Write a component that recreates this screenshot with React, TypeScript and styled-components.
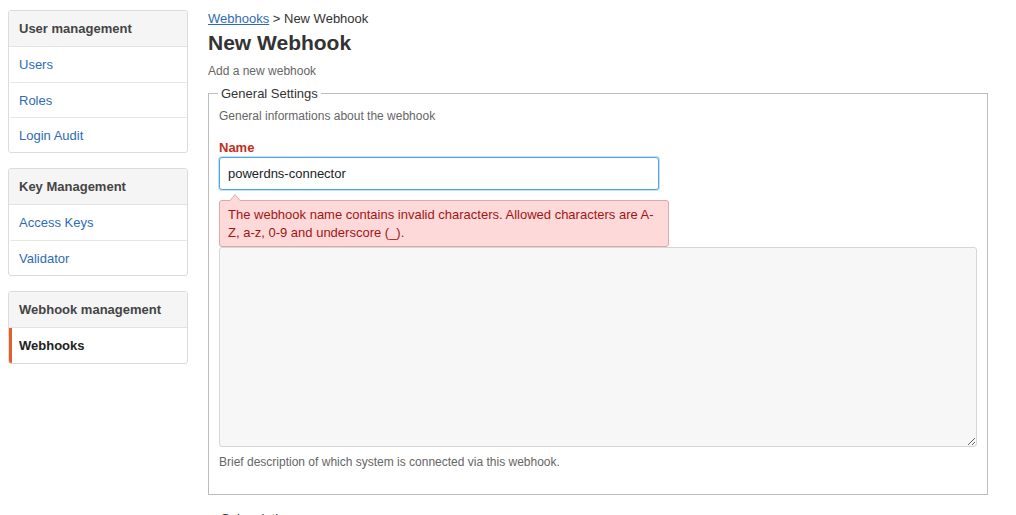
import React from 'react'
import styled, { createGlobalStyle } from 'styled-components'

const GlobalStyle = createGlobalStyle`
	html, body {
		margin: 0;
		padding: 0;
		background: #fff;
		font-family: "Liberation Sans", Arial, sans-serif;
		color: #333;
	}
`

const Page = styled.div`
	display: flex;
	gap: 20px;
	padding: 10px 28px 0 8px;
	height: 515px;
	box-sizing: border-box;
	overflow: hidden;
`

// sidebar
const Sidebar = styled.nav`
	width: 180px;
	flex-shrink: 0;
	display: flex;
	flex-direction: column;
	gap: 15px;
`

const Panel = styled.div`
	border: 1px solid #dcdcdc;
	border-radius: 3px;
	overflow: hidden;
`

const PanelHeader = styled.div`
	background: #f5f5f5;
	height: 36px;
	display: flex;
	align-items: center;
	padding: 0 10px 1px;
	box-sizing: border-box;
	font-size: 13px;
	font-weight: bold;
	color: #444;
	border-bottom: 1px solid #e3e3e3;
`

const PanelItem = styled.a<{ $active?: boolean }>`
	display: flex;
	align-items: center;
	height: 35px;
	padding: 0 10px 0 7px;
	box-sizing: border-box;
	font-size: 13px;
	text-decoration: none;
	color: ${p => (p.$active ? '#222' : '#2d6cb5')};
	font-weight: ${p => (p.$active ? 'bold' : 'normal')};
	border-left: 3px solid ${p => (p.$active ? '#e0622a' : 'transparent')};
	& + & {
		border-top: 1px solid #e6e6e6;
	}
`

// main
const Main = styled.main`
	flex: 1;
	min-width: 0;
`

const Crumbs = styled.div`
	font-size: 13px;
	line-height: 17px;
	color: #333;

	& a {
		color: #2d6cb5;
		text-decoration: underline;
	}
`

const Title = styled.h1`
	margin: 3px 0 0;
	font-size: 21px;
	line-height: 26px;
	font-weight: bold;
	color: #333;
`

const Subtitle = styled.p`
	margin: 7px 0 0;
	font-size: 12px;
	line-height: 16px;
	color: #666;
`

const Fieldset = styled.fieldset`
	margin: 6px 0 0;
	padding: 6px 10px 24px;
	border: 1px solid #bdbdbd;
	min-width: 0;
`

const Legend = styled.legend`
	font-size: 13px;
	line-height: 17px;
	padding: 0 3px;
	margin-left: -1px;
	color: #333;
`

const Hint = styled.p`
	margin: 0;
	font-size: 12px;
	line-height: 16px;
	color: #666;
`

const Group = styled.div`
	margin-top: 15px;
`

const Label = styled.label<{ $error?: boolean }>`
	display: block;
	font-size: 13px;
	line-height: 17px;
	font-weight: bold;
	color: ${p => (p.$error ? '#c0301c' : '#444')};
	margin-bottom: 1px;
`

const Input = styled.input`
	display: block;
	width: 440px;
	height: 33px;
	box-sizing: border-box;
	padding: 0 8px;
	font-family: inherit;
	font-size: 13px;
	color: #222;
	border: 1px solid #53a6e2;
	border-radius: 3px;
	box-shadow: 0 0 0 1px rgba(83, 166, 226, 0.35);
	outline: none;
`

const ErrorTip = styled.div`
	position: relative;
	margin-top: 10px;
	width: 450px;
	box-sizing: border-box;
	padding: 5px 8px 4px;
	background: #fdd9d9;
	border: 1px solid #dba9a9;
	border-radius: 3px;
	color: #a31515;
	font-size: 13px;
	line-height: 18px;

	&::before,
	&::after {
		content: '';
		position: absolute;
		left: 9px;
		border: 6px solid transparent;
		border-top: 0;
	}
	&::before {
		top: -7px;
		border-bottom: 7px solid #dba9a9;
	}
	&::after {
		top: -6px;
		border-bottom: 7px solid #fdd9d9;
	}
`

const TextArea = styled.textarea`
	display: block;
	width: 100%;
	height: 200px;
	box-sizing: border-box;
	background: #f7f7f7;
	border: 1px solid #d6d6d6;
	border-radius: 3px;
	font-family: inherit;
	font-size: 13px;
	padding: 6px 8px;
`

const HelpText = styled(Hint)`
	margin-top: 7px;
`

const NextFieldset = styled(Fieldset)`
	margin-top: 15px;
`

export default function App() {
	return (
		<>
			<GlobalStyle />
			<Page>
				<Sidebar>
					<Panel>
						<PanelHeader>User management</PanelHeader>
						<PanelItem href="#">Users</PanelItem>
						<PanelItem href="#">Roles</PanelItem>
						<PanelItem href="#">Login Audit</PanelItem>
					</Panel>
					<Panel>
						<PanelHeader>Key Management</PanelHeader>
						<PanelItem href="#">Access Keys</PanelItem>
						<PanelItem href="#">Validator</PanelItem>
					</Panel>
					<Panel>
						<PanelHeader>Webhook management</PanelHeader>
						<PanelItem href="#" $active>Webhooks</PanelItem>
					</Panel>
				</Sidebar>

				<Main>
					<Crumbs>
						<a href="#">Webhooks</a> &gt; New Webhook
					</Crumbs>
					<Title>New Webhook</Title>
					<Subtitle>Add a new webhook</Subtitle>

					<Fieldset>
						<Legend>General Settings</Legend>
						<Hint>General informations about the webhook</Hint>

						<Group>
							<Label $error>Name</Label>
							<Input defaultValue="powerdns-connector" />
							<ErrorTip>
								The webhook name contains invalid characters. Allowed characters are A-Z, a-z, 0-9 and underscore (_).
							</ErrorTip>
							<TextArea aria-label="Description" />
							<HelpText>Brief description of which system is connected via this webhook.</HelpText>
						</Group>
					</Fieldset>

					<NextFieldset>
						<Legend>Subscriptions</Legend>
					</NextFieldset>
				</Main>
			</Page>
		</>
	)
}
